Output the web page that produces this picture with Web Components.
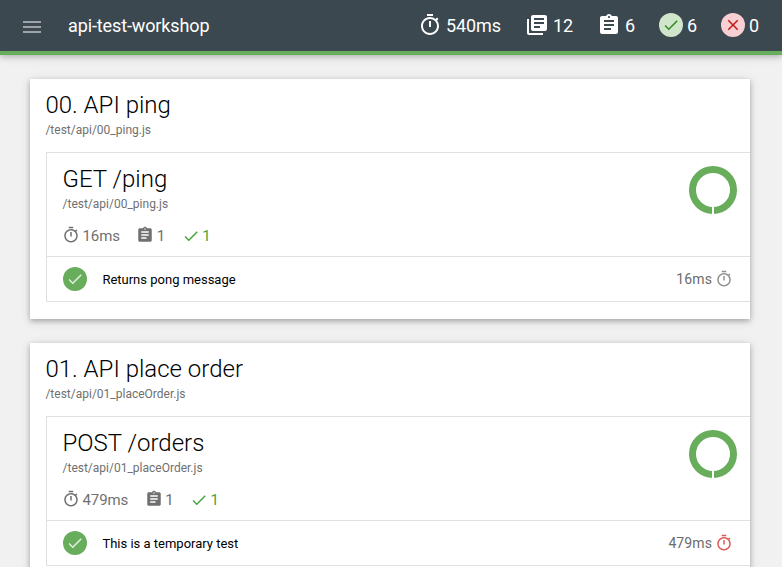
<!DOCTYPE html>
<html lang="en">
<head>
<meta charset="utf-8">
<title>api-test-workshop</title>
<style>
html,body{margin:0;height:567px;overflow:hidden}
body{background:#f1f1f1;font-family:Roboto,"Noto Sans",sans-serif;color:#000}
</style>
</head>
<body>
<report-page></report-page>
<script>
const PATHS = {
  menu: 'M3 18h18v-2H3v2zm0-5h18v-2H3v2zm0-7v2h18V6H3z',
  timer: 'M15 1H9v2h6V1zm-4 13h2V8h-2v6zm8.03-6.61l1.42-1.42c-.43-.51-.9-.99-1.41-1.41l-1.42 1.42C16.07 4.74 14.12 4 12 4c-4.97 0-9 4.03-9 9s4.02 9 9 9 9-4.03 9-9c0-2.12-.74-4.07-1.97-5.61zM12 20c-3.87 0-7-3.13-7-7s3.13-7 7-7 7 3.13 7 7-3.13 7-7 7z',
  books: 'M4 6H2v14c0 1.1.9 2 2 2h14v-2H4V6zm16-4H8c-1.1 0-2 .9-2 2v12c0 1.1.9 2 2 2h12c1.1 0 2-.9 2-2V4c0-1.1-.9-2-2-2zm-1 9H9V9h10v2zm-4 4H9v-2h6v2zm4-8H9V5h10v2z',
  assignment: 'M19 3h-4.18C14.4 1.84 13.3 1 12 1c-1.3 0-2.4.84-2.82 2H5c-1.1 0-2 .9-2 2v14c0 1.1.9 2 2 2h14c1.1 0 2-.9 2-2V5c0-1.1-.9-2-2-2zm-7 0c.55 0 1 .45 1 1s-.45 1-1 1-1-.45-1-1 .45-1 1-1zm2 14H7v-2h7v2zm3-4H7v-2h10v2zm0-4H7V7h10v2z',
  check: 'M9 16.17L4.83 12l-1.42 1.41L9 19 21 7l-1.41-1.41z',
  close: 'M19 6.41L17.59 5 12 10.59 6.41 5 5 6.41 10.59 12 5 17.59 6.41 19 12 13.41 17.59 19 19 17.59 13.41 12z'
};
const define = (name, render) => customElements.define(name, class extends HTMLElement {
  constructor() { super(); this.attachShadow({ mode: 'open' }); }
  connectedCallback() { this.shadowRoot.innerHTML = render(k => this.getAttribute(k) || ''); }
});

define('md-icon', a => `
<style>
:host{display:block;flex:none;width:var(--size,24px);height:var(--size,24px)}
svg{display:block;width:100%;height:100%;fill:currentColor}
</style><svg viewBox="0 0 24 24"><path d="${PATHS[a('name')]}"/></svg>`);

define('icon-disc', a => `
<style>
:host{display:flex;flex:none;width:24px;height:24px;border-radius:50%;align-items:center;justify-content:center;--size:18px}
</style><md-icon name="${a('name')}"></md-icon>`);

define('stat-item', () => `
<style>
:host{display:flex;align-items:center;white-space:nowrap}
</style><slot name="icon"></slot><slot></slot>`);

define('nav-bar', () => `
<style>
:host{display:flex;box-sizing:border-box;height:55px;padding:0 23px 4px 20px;background:linear-gradient(#3b484f 51px,#67ad5b 51px);align-items:center;color:#fff;position:relative;box-shadow:0 2px 5px rgba(0,0,0,.16),0 2px 10px rgba(0,0,0,.12)}
.menu{color:#9da3a7;margin:2px 24px 0 0}
.title{font-size:18px;line-height:24px;letter-spacing:-.12px;flex:1;padding-top:1px}
.stats{display:flex;font-size:18px;line-height:24px;letter-spacing:-.1px}
stat-item>span{padding-top:1px}
stat-item{gap:4px}
.ok{background:#cfe6cb;color:#2d8a25}.bad{background:#f8cfd3;color:#c01c16}
.i{margin-top:-1px}
</style>
<md-icon class="menu" name="menu"></md-icon>
<div class="title">api-test-workshop</div>
<div class="stats">
<stat-item style="width:107px"><md-icon class="i" slot="icon" name="timer"></md-icon><span>540ms</span></stat-item>
<stat-item style="width:72px"><md-icon class="i" slot="icon" name="books"></md-icon><span>12</span></stat-item>
<stat-item style="width:62px"><md-icon class="i" slot="icon" name="assignment"></md-icon><span>6</span></stat-item>
<stat-item style="width:62px"><icon-disc slot="icon" class="ok i" name="check"></icon-disc><span>6</span></stat-item>
<stat-item style="width:38px"><icon-disc slot="icon" class="bad i" name="close"></icon-disc><span>0</span></stat-item>
</div>`);

define('progress-ring', () => `
<style>:host{display:block;width:48px;height:48px}svg{display:block}</style>
<svg width="48" height="48"><circle cx="24" cy="24" r="20.5" fill="none" stroke="#67ad5b" stroke-width="7"/><path d="M24 39v9" stroke="#fff" stroke-width="2"/></svg>`);

define('test-row', a => `
<style>
:host{display:flex;box-sizing:border-box;height:45px;border-top:1px solid #e0e0e0;padding:0 17px 0 16px;align-items:center;--size:18px}
icon-disc{background:#67ad5b;color:#e1f0de;margin-right:15.4px}
.name{flex:1;font-size:13px;line-height:20px;padding-top:1px;letter-spacing:0}
.time{font-size:14px;line-height:20px;color:#6c6c6c;margin-right:3px;letter-spacing:.1px}
.speed{color:${a('slow') ? '#dc5b56' : '#929292'};margin-top:-1px}
</style>
<icon-disc name="check"></icon-disc><div class="name"><slot></slot></div>
<span class="time">${a('time')}</span><md-icon class="speed" name="timer"></md-icon>`);

define('suite-box', a => `
<style>
:host{display:block;border:solid #e0e0e0;border-width:1px 0 1px 1px;margin-left:16px}
.head{display:flex;justify-content:space-between;height:103px;padding:0 13px 0 15.5px;box-sizing:border-box}
h3{font-size:24px;line-height:28px;font-weight:300;margin:12px 0 0}
.file{font-size:12px;line-height:16px;color:#707070;margin-top:3px}
progress-ring{margin-top:13px}
.stats{display:flex;gap:16.5px;--size:18px;font-size:15px;line-height:20px;color:#707070;margin-top:14px;letter-spacing:-.1px}
stat-item{gap:2.5px}
stat-item:first-child{margin-left:-.5px}
md-icon{margin-top:-2px}
.pass{color:#47a33f}
.pass md-icon{margin-top:0}
</style>
<div class="head"><div><h3>${a('name')}</h3><div class="file">${a('file')}</div>
<div class="stats">
<stat-item><md-icon slot="icon" name="timer"></md-icon>${a('time')}</stat-item>
<stat-item><md-icon slot="icon" name="assignment"></md-icon>1</stat-item>
<stat-item class="pass"><md-icon slot="icon" name="check"></md-icon>1</stat-item>
</div></div><progress-ring></progress-ring></div><slot></slot>`);

define('suite-card', a => `
<style>
:host{display:block;box-sizing:border-box;height:240px;background:#fff;box-shadow:0 2px 5px rgba(0,0,0,.24),0 2px 10px rgba(0,0,0,.13)}
h2{font-size:24px;line-height:28px;font-weight:300;margin:0;padding:12px 15.4px 0}
.file{font-size:12px;line-height:16px;color:#707070;padding:3px 15.4px 14px}
</style><h2>${a('name')}</h2><div class="file">${a('file')}</div><slot></slot>`);

define('report-page', () => `
<style>
:host{display:block;height:567px;overflow:hidden}
main{display:flex;flex-direction:column;gap:24px;padding:24px 32px 24px 30px}
</style>
<nav-bar></nav-bar>
<main>
<suite-card name="00. API ping" file="/test/api/00_ping.js"><suite-box name="GET /ping" file="/test/api/00_ping.js" time="16ms"><test-row time="16ms">Returns pong message</test-row></suite-box></suite-card>
<suite-card name="01. API place order" file="/test/api/01_placeOrder.js"><suite-box name="POST /orders" file="/test/api/01_placeOrder.js" time="479ms"><test-row time="479ms" slow="true">This is a temporary test</test-row></suite-box></suite-card>
</main>`);
</script>
</body>
</html>
